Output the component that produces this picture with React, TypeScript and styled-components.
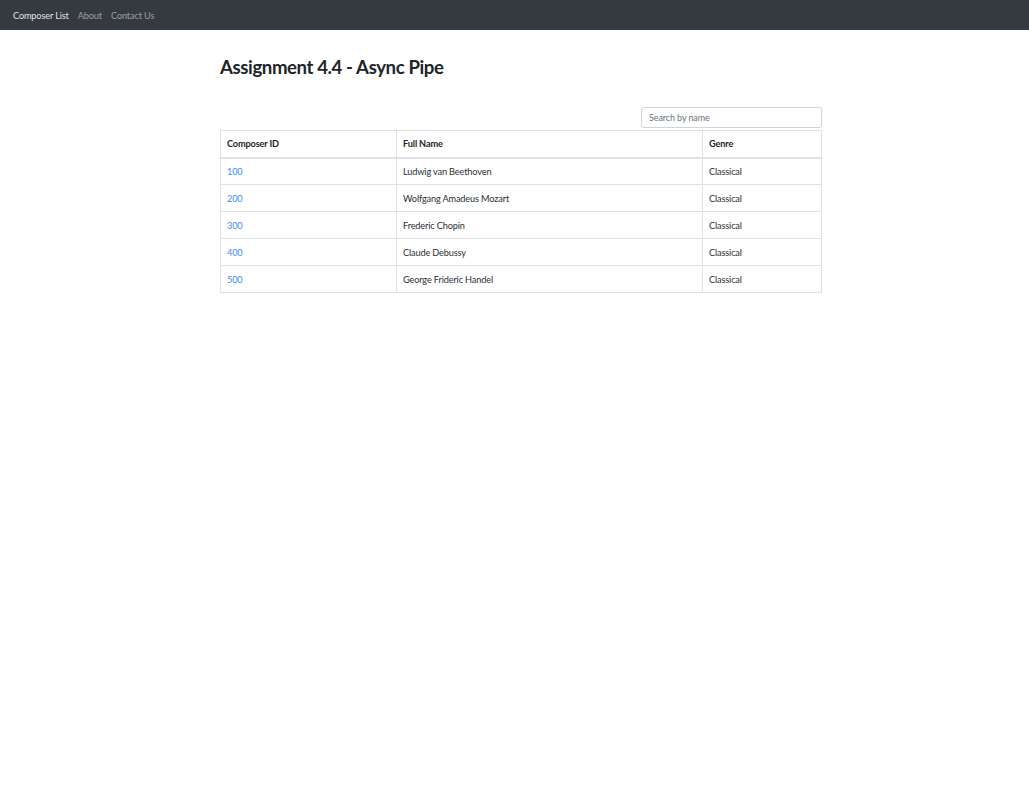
import styled, { createGlobalStyle } from "styled-components";

const composers = [
  { id: 100, name: "Ludwig van Beethoven", genre: "Classical" },
  { id: 200, name: "Wolfgang Amadeus Mozart", genre: "Classical" },
  { id: 300, name: "Frederic Chopin", genre: "Classical" },
  { id: 400, name: "Claude Debussy", genre: "Classical" },
  { id: 500, name: "George Frideric Handel", genre: "Classical" },
];

const GlobalStyle = createGlobalStyle`
  html, body {
    margin: 0;
    background: #fff;
    font-family: Lato, "Open Sans", sans-serif;
    color: #212529;
  }
  * { box-sizing: border-box; }
`;

function App() {
  return (
    <>
      <GlobalStyle />
      <Navbar>
        <NavLink $active>Composer List</NavLink>
        <NavLink>About</NavLink>
        <NavLink>Contact Us</NavLink>
      </Navbar>

      <Container>
        <Title>Assignment 4.4 - Async Pipe</Title>

        <SearchRow>
          <SearchInput placeholder="Search by name" />
        </SearchRow>

        <Table>
          <thead>
            <tr>
              <HeadCell $width={176}>Composer ID</HeadCell>
              <HeadCell $width={306}>Full Name</HeadCell>
              <HeadCell>Genre</HeadCell>
            </tr>
          </thead>
          <tbody>
            {composers.map((c) => (
              <tr key={c.id}>
                <Cell>
                  <IdLink href="#">{c.id}</IdLink>
                </Cell>
                <Cell>{c.name}</Cell>
                <Cell>{c.genre}</Cell>
              </tr>
            ))}
          </tbody>
        </Table>
      </Container>
    </>
  );
}

export default App;

const Navbar = styled.nav`
  height: 30px;
  background: #343a40;
  display: flex;
  align-items: center;
  gap: 9px;
  padding: 0 13px;
`;

const NavLink = styled.a<{ $active?: boolean }>`
  font-size: 9.2px;
  letter-spacing: -0.15px;
  color: ${(p) => (p.$active ? "rgba(255,255,255,0.88)" : "rgba(255,255,255,0.5)")};
  text-decoration: none;
  cursor: pointer;
`;

const Container = styled.main`
  width: 602px;
  margin-left: 220px;
  padding-top: 25px;
`;

const Title = styled.h1`
  margin: 0;
  font-size: 18.6px;
  font-weight: 700;
  letter-spacing: -0.4px;
  line-height: 24px;
  color: #212529;
`;

const SearchRow = styled.div`
  display: flex;
  justify-content: flex-end;
  margin-top: 28px;
`;

const SearchInput = styled.input`
  width: 181px;
  height: 21px;
  border: 1px solid #ced4da;
  border-radius: 3px;
  padding: 0 7px;
  font-family: inherit;
  font-size: 9px;
  letter-spacing: -0.1px;
  color: #495057;
  &::placeholder {
    color: #6c757d;
  }
`;

const Table = styled.table`
  width: 100%;
  margin-top: 2px;
  border-collapse: collapse;
  font-size: 9.2px;
  letter-spacing: -0.15px;
`;

const HeadCell = styled.th<{ $width?: number }>`
  width: ${(p) => (p.$width ? `${p.$width}px` : "auto")};
  height: 27px;
  text-align: left;
  padding: 0 6px;
  font-weight: 700;
  border: 1px solid #dee2e6;
  border-bottom-width: 2px;
`;

const Cell = styled.td`
  height: 27px;
  padding: 0 6px;
  border: 1px solid #dee2e6;
  color: #2b2f33;
`;

const IdLink = styled.a`
  color: #3a8cf5;
  text-decoration: none;
`;
